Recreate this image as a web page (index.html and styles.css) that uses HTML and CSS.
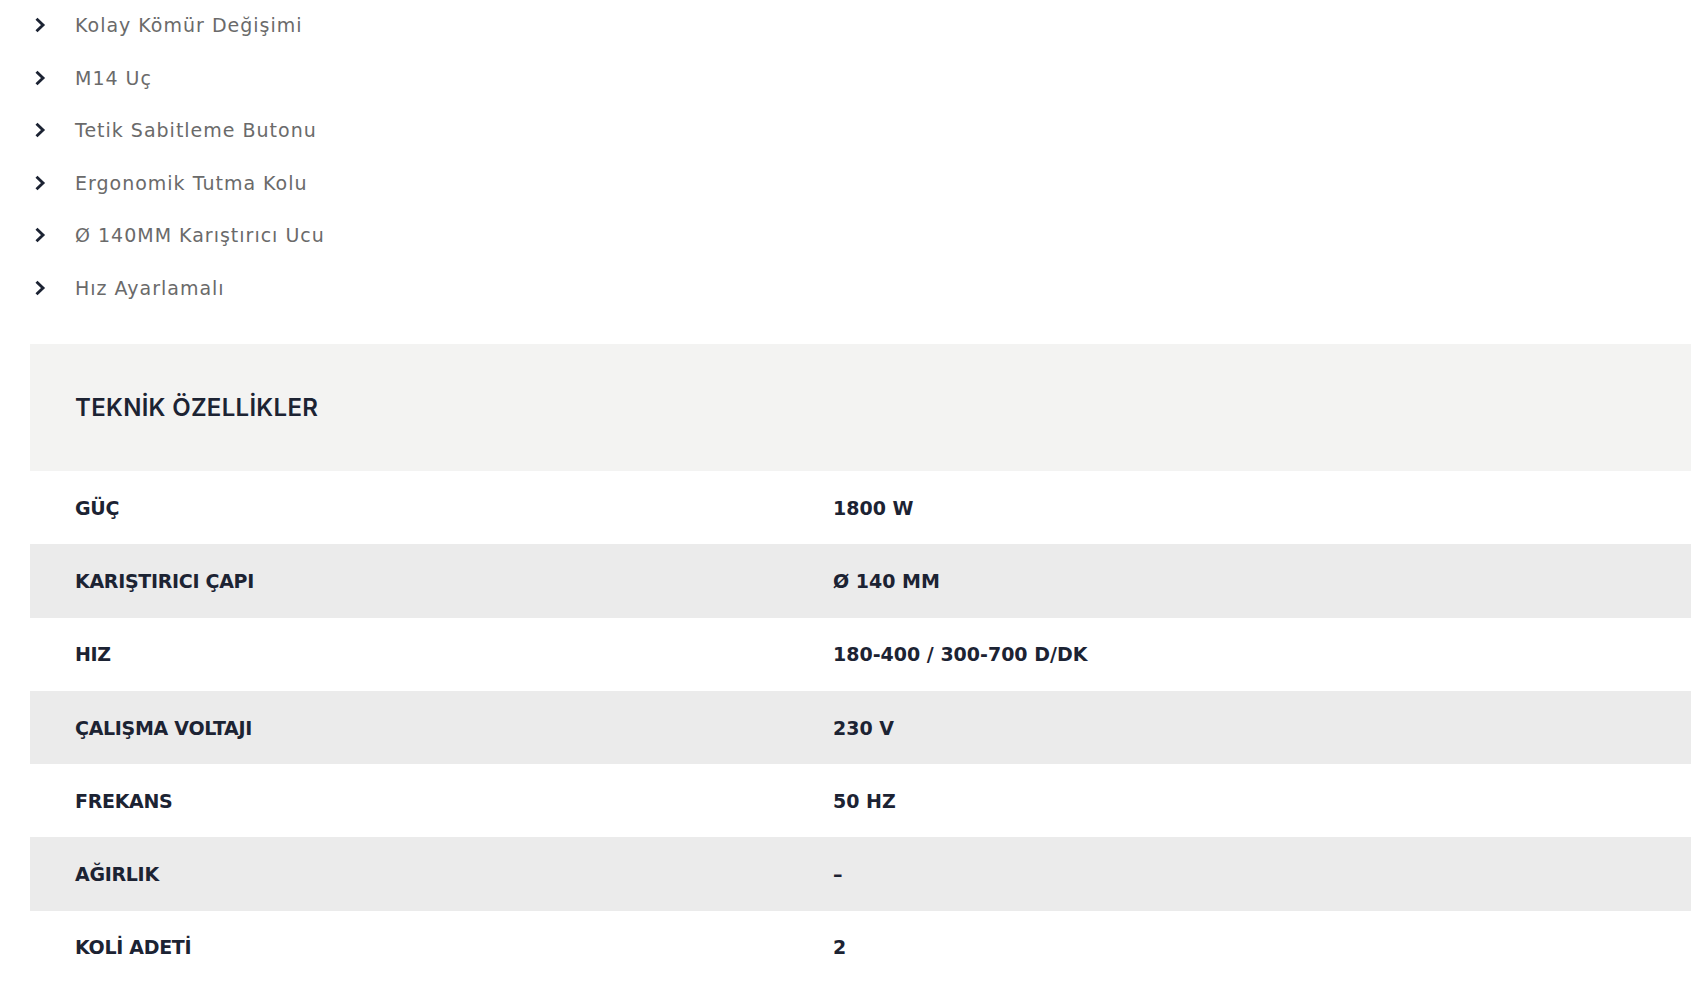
FILE: index.html
```html
<!DOCTYPE html>
<html lang="tr">
<head>
<meta charset="utf-8">
<title>Teknik Özellikler</title>
<link rel="stylesheet" href="styles.css">
</head>
<body>
<ul class="features">
  <li class="feature"><svg class="chev" viewBox="0 0 12 16"><path d="M2.5 1.8 L9 8 L2.5 14.2"/></svg><span>Kolay Kömür Değişimi</span></li>
  <li class="feature"><svg class="chev" viewBox="0 0 12 16"><path d="M2.5 1.8 L9 8 L2.5 14.2"/></svg><span>M14 Uç</span></li>
  <li class="feature"><svg class="chev" viewBox="0 0 12 16"><path d="M2.5 1.8 L9 8 L2.5 14.2"/></svg><span>Tetik Sabitleme Butonu</span></li>
  <li class="feature"><svg class="chev" viewBox="0 0 12 16"><path d="M2.5 1.8 L9 8 L2.5 14.2"/></svg><span>Ergonomik Tutma Kolu</span></li>
  <li class="feature"><svg class="chev" viewBox="0 0 12 16"><path d="M2.5 1.8 L9 8 L2.5 14.2"/></svg><span>Ø 140MM Karıştırıcı Ucu</span></li>
  <li class="feature"><svg class="chev" viewBox="0 0 12 16"><path d="M2.5 1.8 L9 8 L2.5 14.2"/></svg><span>Hız Ayarlamalı</span></li>
</ul>

<section class="specs">
  <h2 class="specs-title">TEKNİK ÖZELLİKLER</h2>
  <div class="spec-row"><div class="spec-label">GÜÇ</div><div class="spec-value">1800 W</div></div>
  <div class="spec-row alt"><div class="spec-label">KARIŞTIRICI ÇAPI</div><div class="spec-value">Ø 140 MM</div></div>
  <div class="spec-row"><div class="spec-label">HIZ</div><div class="spec-value">180-400 / 300-700 D/DK</div></div>
  <div class="spec-row alt"><div class="spec-label">ÇALIŞMA VOLTAJI</div><div class="spec-value">230 V</div></div>
  <div class="spec-row"><div class="spec-label">FREKANS</div><div class="spec-value">50 HZ</div></div>
  <div class="spec-row alt"><div class="spec-label">AĞIRLIK</div><div class="spec-value">–</div></div>
  <div class="spec-row"><div class="spec-label">KOLİ ADETİ</div><div class="spec-value">2</div></div>
</section>
</body>
</html>
```

FILE: styles.css
```css
html, body {
  margin: 0;
  padding: 0;
  background: #ffffff;
}

body {
  font-family: Inter, "Open Sans", "Liberation Sans", sans-serif;
  color: #1c2333;
}

.features {
  list-style: none;
  margin: -1px 0 0 0;
  padding: 0 0 0 34px;
}

.feature {
  display: flex;
  align-items: center;
  height: 52.5px;
  font-family: "DejaVu Sans", Inter, sans-serif;
  font-size: 19px;
  letter-spacing: 1px;
  color: #6a6a6a;
}

.chev {
  width: 12px;
  height: 16px;
  margin-right: 29px;
  flex: none;
}

.chev path {
  fill: none;
  stroke: #1c2333;
  stroke-width: 2.9;
  stroke-linecap: butt;
  stroke-linejoin: miter;
}

.specs {
  margin: 30px 0 0 30px;
}

.specs-title {
  margin: 0;
  height: 127px;
  display: flex;
  align-items: center;
  padding-left: 45px;
  background: #f3f3f2;
  font-size: 24px;
  font-weight: 600;
  color: #1c2333;
  letter-spacing: 0.3px;
}

.spec-row {
  display: grid;
  grid-template-columns: 758px 1fr;
  height: 73.3px;
  align-items: center;
  background: #ffffff;
  font-family: "DejaVu Sans", Inter, sans-serif;
  font-size: 19px;
  font-weight: 700;
  color: #1c2333;
}

.spec-row.alt {
  background: #ebebeb;
}

.spec-label,
.spec-value {
  padding-left: 45px;
}

.spec-label {
  letter-spacing: -0.3px;
}
```
